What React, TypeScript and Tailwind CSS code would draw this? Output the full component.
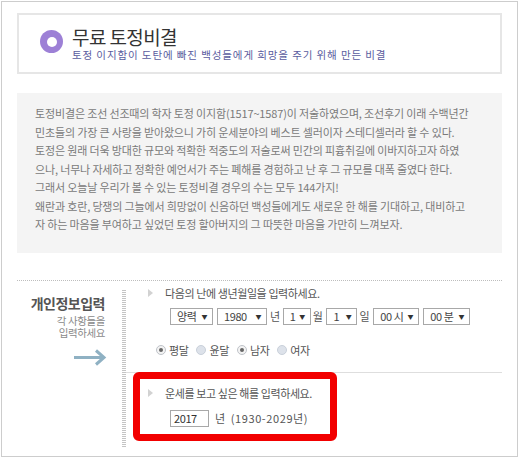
import React from "react";
import clsx from "clsx";

const Marker = () => (
  <span className="inline-block h-0 w-0 border-y-[4px] border-l-[5px] border-y-transparent border-l-[#d2d2d2]" />
);

const FakeSelect = ({ value, className }: { value: string; className: string }) => (
  <div
    className={clsx(
      "flex h-[17px] items-center justify-between border border-[#a8a8a8] bg-white pl-[6px] pr-[5px] text-[#444]",
      className
    )}
  >
    <span>{value}</span>
    <span className="text-[6px] leading-none text-[#333]">▼</span>
  </div>
);

const Radio = ({ checked = false }: { checked?: boolean }) => (
  <span
    className={clsx(
      "flex h-[10px] w-[10px] items-center justify-center rounded-full border",
      checked ? "border-[#bfc3c9] bg-[#f3f3f3]" : "border-[#c9d0da] bg-[#dde2ea]"
    )}
  >
    {checked && <span className="h-[4px] w-[4px] rounded-full bg-[#666]" />}
  </span>
);

const introLines = [
  "토정비결은 조선 선조때의 학자 토정 이지함(1517~1587)이 저술하였으며, 조선후기 이래 수백년간",
  "민초들의 가장 큰 사랑을 받아왔으니 가히 운세분야의 베스트 셀러이자 스테디셀러라 할 수 있다.",
  "토정은 원래 더욱 방대한 규모와 적확한 적중도의 저술로써 민간의 피흉취길에 이바지하고자 하였",
  "으나, 너무나 자세하고 정확한 예언서가 주는 폐해를 경험하고 난 후 그 규모를 대폭 줄였다 한다.",
  "그래서 오늘날 우리가 볼 수 있는 토정비결 경우의 수는 모두 144가지!",
  "왜란과 호란, 당쟁의 그늘에서 희망없이 신음하던 백성들에게도 새로운 한 해를 기대하고, 대비하고",
  "자 하는 마음을 부여하고 싶었던 토정 할아버지의 그 따뜻한 마음을 가만히 느껴보자.",
];

export default function App() {
  return (
    <div className="relative h-[457px] w-[520px] overflow-hidden bg-white pl-[1px] pt-[1px] font-['Noto_Sans_CJK_KR',sans-serif]">
      <div className="h-[456px] w-[517px] border border-[#cdcdcd] px-[15px] pt-[11px]">
        {/* title */}
        <div className="flex h-[61px] items-start border-2 border-[#e6e6e6] pl-[21px] pt-[11px]">
          <div className="mt-[4px] flex h-[23px] w-[23px] items-center justify-center rounded-full bg-[#9d80d6]">
            <div className="h-[10px] w-[10px] rounded-full bg-white" />
          </div>
          <div className="ml-[9px] flex flex-col">
            <h1 className="text-[19px] leading-[22px] tracking-[-0.6px] text-[#333]">무료 토정비결</h1>
            <p className="mt-[1px] text-[10.5px] leading-[12px] tracking-[0.9px] text-[#5a5c9e]">
              토정 이지함이 도탄에 빠진 백성들에게 희망을 주기 위해 만든 비결
            </p>
          </div>
        </div>

        {/* intro */}
        <div className="mt-[19px] h-[160px] bg-[#f4f4f4] pl-[18px] pt-[11px] text-[11px] leading-[18.5px] tracking-[-0.15px] text-[#7a7a7a]">
          {introLines.map((line) => (
            <p key={line} className="whitespace-nowrap">
              {line}
            </p>
          ))}
        </div>

        <div className="mt-[27px] border-t border-dotted border-[#bdbdbd]" />

        {/* form */}
        <div className="flex text-[11px] tracking-[-0.4px] text-[#555]">
          <div className="flex w-[105px] flex-col items-end pr-[17px] pt-[13px]">
            <h2 className="text-[14px] font-bold leading-[18px] tracking-[-0.5px] text-[#555]">개인정보입력</h2>
            <p className="mt-[3px] text-right text-[10.5px] leading-[12px] text-[#8a8a8a]">
              각 사항들을
              <br />
              입력하세요
            </p>
            <svg className="-mr-[2px] mt-[10px]" width="34" height="17" viewBox="0 0 34 17">
              <path
                d="M1 8.5H31M23 1.5L31 8.5L23 15.5"
                fill="none"
                stroke="#8fb1c3"
                strokeWidth="3"
              />
            </svg>
          </div>

          <div className="mt-[9px] h-[157px] w-[4px] bg-[repeating-linear-gradient(to_bottom,#c4c4c4_0px,#c4c4c4_1px,transparent_1px,transparent_2px)]" />

          <div className="flex-1">
            <div className="h-[92px] border-b border-[#dedede] pl-[22px] pt-[4px]">
              <div className="flex h-[16px] items-center gap-[12px]">
                <Marker />
                <span>다음의 난에 생년월일을 입력하세요.</span>
              </div>
              <div className="mt-[7px] flex items-center pl-[22px]">
                <FakeSelect value="양력" className="w-[43px]" />
                <FakeSelect value="1980" className="ml-[4px] w-[50px]" />
                <span className="ml-[3px]">년</span>
                <FakeSelect value="1" className="ml-[3px] w-[28px]" />
                <span className="ml-[2px]">월</span>
                <FakeSelect value="1" className="ml-[4px] w-[31px]" />
                <span className="ml-[2px]">일</span>
                <FakeSelect value="00 시" className="ml-[4px] w-[46px]" />
                <FakeSelect value="00 분" className="ml-[4px] w-[47px]" />
              </div>
              <div className="mt-[17px] flex items-center pl-[8px]">
                <Radio checked />
                <span className="ml-[3px]">평달</span>
                <span className="ml-[8px]" />
                <Radio />
                <span className="ml-[3px]">윤달</span>
                <span className="ml-[8px]" />
                <Radio checked />
                <span className="ml-[3px]">남자</span>
                <span className="ml-[8px]" />
                <Radio />
                <span className="ml-[3px]">여자</span>
              </div>
            </div>

            <div className="pl-[22px] pt-[12px]">
              <div className="flex h-[16px] items-center gap-[12px]">
                <Marker />
                <span>운세를 보고 싶은 해를 입력하세요.</span>
              </div>
              <div className="mt-[9px] flex items-center pl-[22px]">
                <div className="flex h-[17px] w-[39px] items-center border border-[#a8a8a8] pl-[3px] text-[#333]">2017</div>
                <span className="ml-[6px]">년</span>
                <span className="ml-[6px] tracking-[0.6px]">(1930-2029년)</span>
              </div>
            </div>
          </div>
        </div>
      </div>

      {/* highlight annotation */}
      <div className="pointer-events-none absolute left-[133px] top-[372px] h-[69px] w-[204px] rounded-[6px] border-[7px] border-[#f20000]" />
    </div>
  );
}
